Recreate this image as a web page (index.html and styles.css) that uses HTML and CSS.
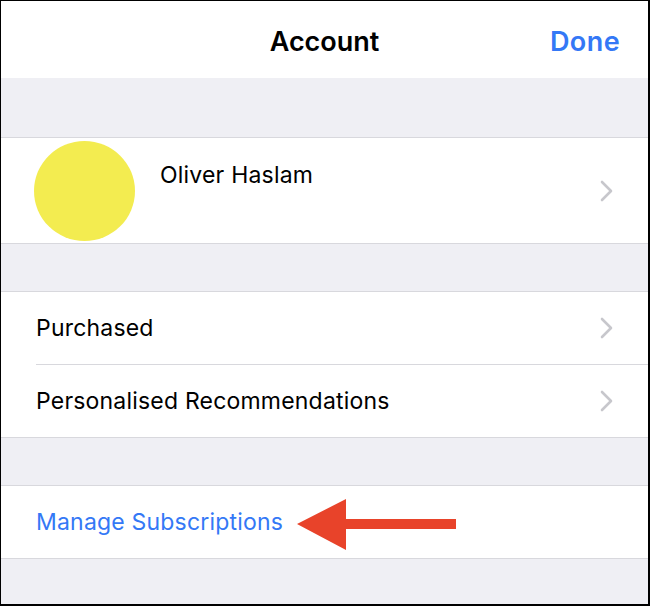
FILE: index.html
```html
<!DOCTYPE html>
<html>
<head>
<meta charset="utf-8">
<link rel="stylesheet" href="styles.css">
</head>
<body>
<div class="frame">
  <header class="nav">
    <span></span>
    <h1 class="title">Account</h1>
    <a class="done">Done</a>
  </header>
  <div class="spacer first"></div>
  <section class="group">
    <div class="row profile">
      <div class="avatar"></div>
      <div class="name">Oliver Haslam</div>
      <svg class="chev" width="13" height="22" viewBox="0 0 13 22"><path d="M2 2 L11 11 L2 20" fill="none" stroke="#c7c7cc" stroke-width="2.6" stroke-linecap="round" stroke-linejoin="round"/></svg>
    </div>
  </section>
  <div class="spacer"></div>
  <section class="group">
    <div class="row item">
      <span class="label">Purchased</span>
      <svg class="chev" width="13" height="22" viewBox="0 0 13 22"><path d="M2 2 L11 11 L2 20" fill="none" stroke="#c7c7cc" stroke-width="2.6" stroke-linecap="round" stroke-linejoin="round"/></svg>
    </div>
    <div class="row item sep">
      <span class="label">Personalised Recommendations</span>
      <svg class="chev" width="13" height="22" viewBox="0 0 13 22"><path d="M2 2 L11 11 L2 20" fill="none" stroke="#c7c7cc" stroke-width="2.6" stroke-linecap="round" stroke-linejoin="round"/></svg>
    </div>
  </section>
  <div class="spacer"></div>
  <section class="group">
    <div class="row item manage">
      <span class="label link">Manage Subscriptions</span>
      <svg class="arrow" width="162" height="54" viewBox="0 0 162 54"><polygon points="0,25 49,0 49,20 159,20 159,30 49,30 49,51" fill="#e8432a"/></svg>
    </div>
  </section>
  <div class="fill"></div>
</div>
</body>
</html>
```
FILE: styles.css
```css
* { box-sizing: border-box; margin: 0; padding: 0; }
html, body { width: 650px; height: 606px; overflow: hidden; }
body { background: #000; font-family: Inter, "Noto Sans", sans-serif; color: #000; }
.frame {
  width: 650px; height: 606px;
  border-top: 1px solid #000; border-left: 1px solid #000;
  border-right: 2px solid #000; border-bottom: 2px solid #000;
  background: #efeff4;
  display: flex; flex-direction: column;
}
.nav {
  height: 77px; background: #fff; flex: none;
  display: grid; grid-template-columns: 1fr auto 1fr; align-items: center;
}
.title { font-size: 27px; font-weight: 600; line-height: 1; padding-top: 3px; }
.done { justify-self: end; padding-right: 28px; color: #3478f6; font-size: 27px; font-weight: 600; line-height: 1; padding-top: 3px; letter-spacing: 0.4px; }
.spacer { height: 48px; border-bottom: 1px solid #d8d8dd; flex: none; }
.spacer.first { height: 60px; }
.group { background: #fff; border-bottom: 1px solid #d8d8dd; flex: none; }
.row { display: flex; align-items: center; position: relative; padding-right: 35px; }
.profile { height: 105px; padding-left: 33px; }
.avatar { width: 101px; height: 100px; border-radius: 50%; background: #f3ec50; flex: none; }
.name { font-size: 23px; letter-spacing: 0.2px; margin-left: 25px; align-self: flex-start; margin-top: 23px; flex: 1; }
.item { height: 72px; padding-left: 35px; }
.item.sep { height: 73px; padding-top: 1px; }
.item.sep::before { content: ""; position: absolute; left: 35px; right: 0; top: 0; border-top: 1px solid #d8d8dd; }
.label { font-size: 23px; letter-spacing: 0.2px; flex: 1; }
.link { color: #3478f6; flex: none; }
.chev { flex: none; }
.arrow { position: absolute; left: 296px; top: 13px; }
.fill { flex: 1; }
```
